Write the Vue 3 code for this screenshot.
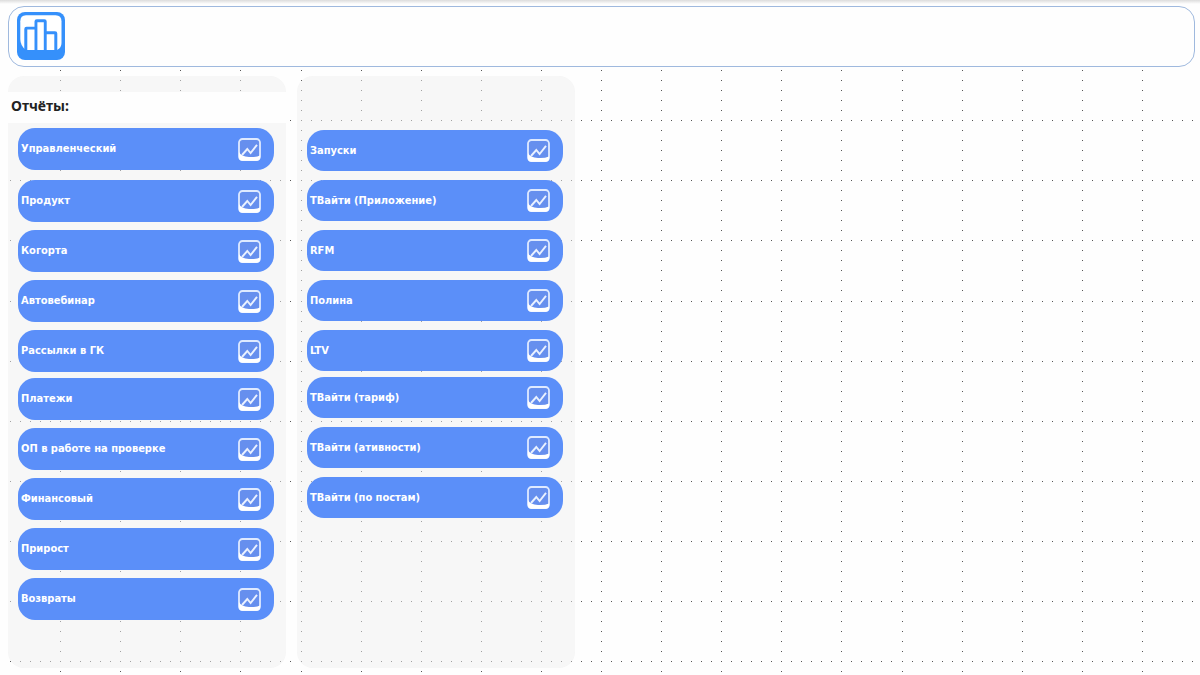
<script setup>
const columns = [
  {
    id: 'main',
    title: 'Отчёты:',
    groups: [
      ['Управленческий', 'Продукт', 'Когорта', 'Автовебинар', 'Рассылки в ГК'],
      ['Платежи', 'ОП в работе на проверке', 'Финансовый', 'Прирост', 'Возвраты'],
    ],
  },
  {
    id: 'extra',
    title: '',
    groups: [
      ['Запуски', 'ТВайти (Приложение)', 'RFM', 'Полина', 'LTV'],
      ['ТВайти (тариф)', 'ТВайти (ативности)', 'ТВайти (по постам)'],
    ],
  },
]

// Dotted guides: a dot every sixth of a cell along each grid line.
const CELL = 60.1
const STEP = CELL / 6
const COLS = 48
const ROWS = 30
const dots = []
for (let i = 1; i <= COLS * 6; i++) {
  for (let j = 7; j <= ROWS * 6; j++) {
    if (i % 6 && j % 6) continue
    dots.push(`M${Math.round(i * STEP)} ${Math.round(j * STEP)}h1v1h-1z`)
  }
}
const dotPath = dots.join('')
</script>

<template>
  <div class="page">
    <svg class="grid" aria-hidden="true" shape-rendering="crispEdges">
      <path :d="dotPath" fill="#555" />
    </svg>

    <header class="header">
      <a class="logo" href="#" aria-label="Главная">
        <svg viewBox="0 0 48 48" aria-hidden="true">
          <rect width="48" height="48" rx="8" fill="#3590fb" />
          <path d="M9 3.300H38.500Q44.500 3.300 44.500 9.300V31Q44.500 36 40 38H9Q3.300 34 3.300 27V9.300Q3.300 3.300 9 3.300Z" fill="#fff" />
          <path
            d="M7.300 39V17Q7.300 14.700 9.600 14.700H17.500V9.600Q17.500 7.300 19.800 7.300H27.400Q29.700 7.300 29.700 9.600V19.300H38Q40.300 19.300 40.300 21.600V39Z"
            fill="#3590fb"
          />
          <path d="M10.300 17.500H17.500V38H10.300Z M20.400 10.200H26.800V38H20.400Z M29.700 22.200H37.300V38H29.700Z" fill="#fff" />
        </svg>
      </a>
    </header>

    <main class="columns">
      <section v-for="column in columns" :key="column.id" class="panel" :class="column.id">
        <h1 v-if="column.title" class="title">{{ column.title }}</h1>
        <nav class="groups">
          <ul v-for="(group, index) in column.groups" :key="index" class="group">
            <li v-for="name in group" :key="name">
              <a class="report" href="#">
                <span>{{ name }}</span>
                <svg class="chart" viewBox="0 0 23 23" aria-hidden="true">
                  <rect x="1" y="1" width="21" height="21" rx="3.500" fill="#668fee" stroke="#dfeaff" stroke-width="1.800" />
                  <path d="M1 14Q3 18.500 11 19Q18 19.300 22 17.500V19.500Q22 22.800 19 22.800H4Q1 22.800 1 19.500Z" fill="#fff" />
                  <path d="M4 17L9.300 11L12.600 15L19 6.800" fill="none" stroke="#eaf1ff" stroke-width="1.900" />
                </svg>
              </a>
            </li>
          </ul>
        </nav>
      </section>
    </main>
  </div>
</template>

<style>
body {
  margin: 0;
  background: #fefefe;
}
</style>

<style scoped>
.page {
  position: relative;
  box-sizing: border-box;
  min-height: 100vh;
  padding: 6px 5px 6px 8px;
  overflow: hidden;
  background: linear-gradient(#dcdcdc, #fefefe 4px);
  font-family: "Noto Sans", "Open Sans", sans-serif;
}

.grid {
  position: absolute;
  inset: 0;
  width: 100%;
  height: 100%;
}

.header {
  position: relative;
  box-sizing: border-box;
  height: 61px;
  padding: 5px 8px;
  border: 1px solid #9fb9de;
  border-radius: 16px;
  background: #fefefe;
}

.logo {
  display: block;
  width: 48px;
}

.logo svg {
  display: block;
  width: 48px;
  height: 48px;
}

.columns {
  position: relative;
  display: flex;
  align-items: stretch;
  gap: 11px;
  margin-top: 9px;
}

.panel {
  box-sizing: border-box;
  width: 278px;
  padding-bottom: 48px;
  border-radius: 16px;
  background: rgba(240, 240, 240, 0.5);
}

.main {
  padding-top: 16px;
}

.extra {
  padding-top: 54px;
}

.title {
  margin: 0 0 5px;
  padding: 0 3px 4px;
  background: #fefefe;
  color: #222;
  font-size: 14px;
  font-weight: 700;
  line-height: 27px;
}

.groups {
  display: flex;
  flex-direction: column;
  gap: 6px;
  padding: 0 12px 0 10px;
}

.group {
  display: flex;
  flex-direction: column;
  gap: 8px;
  margin: 0;
  padding: 0;
  list-style: none;
}

.main .group:first-child li:first-child {
  margin-bottom: 2px;
}

.extra .group {
  gap: 9px;
}

.report {
  display: flex;
  align-items: center;
  justify-content: space-between;
  box-sizing: border-box;
  height: 42px;
  padding: 0 13px 0 3px;
  border-radius: 17px;
  background: #5b8ff9;
  color: #fff;
  font-family: Tahoma, "DejaVu Sans Condensed", "Noto Sans", sans-serif;
  font-size: 11px;
  font-weight: 700;
  line-height: 16px;
  text-decoration: none;
  white-space: nowrap;
}

.extra .report {
  height: 41px;
}

.chart {
  flex: none;
  width: 23px;
  height: 23px;
}
</style>
